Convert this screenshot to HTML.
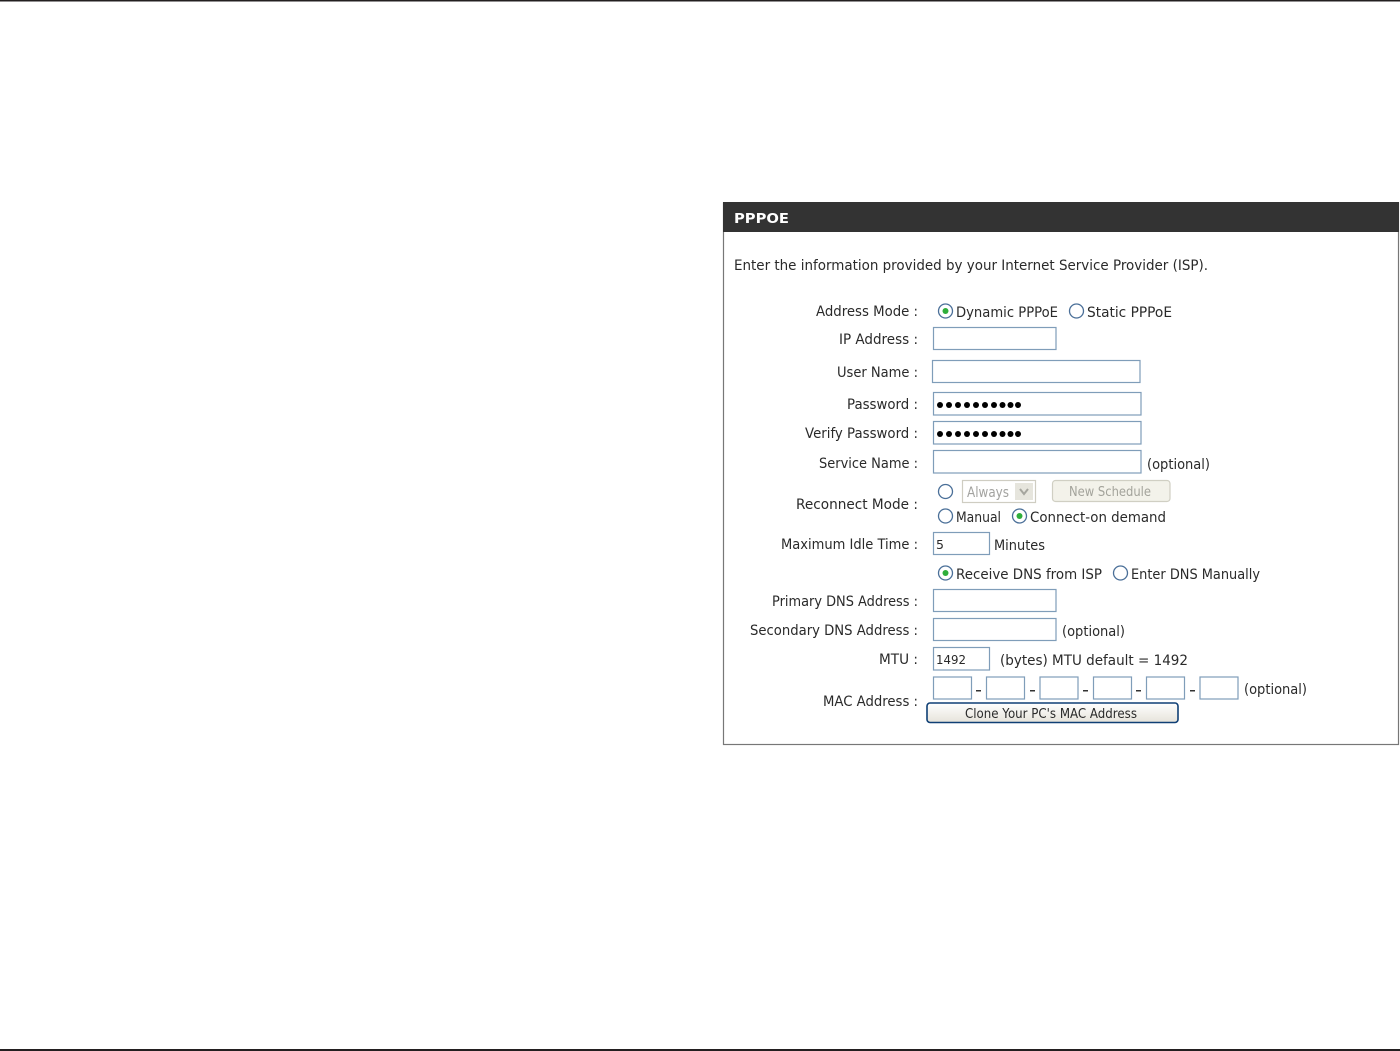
<!DOCTYPE html>
<html><head><meta charset="utf-8"><style>
html,body{margin:0;padding:0;background:#fff;width:1400px;height:1051px;overflow:hidden}
svg{display:block}
text{font-family:"DejaVu Sans",sans-serif;font-size:14px;fill:#2a2a2a}
.i{fill:#fff;stroke:#7f9db9;stroke-width:1.2}
.r{fill:#fff;stroke:#4a6f98;stroke-width:1.3}
.d{fill:#2fae3a}
.dot{fill:#000}
</style></head><body>
<svg width="1400" height="1051" viewBox="0 0 1400 1051" xmlns="http://www.w3.org/2000/svg" lengthAdjust="spacingAndGlyphs">
<defs><linearGradient id="b" x1="0" y1="0" x2="0" y2="1"><stop offset="0" stop-color="#fff"/><stop offset="1" stop-color="#e6e3da"/></linearGradient></defs>
<rect x="0" y="0" width="1400" height="1.5" fill="#231f20"/>
<rect x="0" y="1049" width="1400" height="2" fill="#231f20"/>

<rect x="723.5" y="203" width="675" height="541.5" fill="#fff" stroke="#777" stroke-width="1.2"/>
<rect x="723" y="202" width="676" height="30" fill="#333"/>
<text x="734" y="223" textLength="55" lengthAdjust="spacingAndGlyphs" style="fill:#fff;font-weight:700;font-size:13.5px">PPPOE</text>

<text x="734" y="270" textLength="474" lengthAdjust="spacingAndGlyphs">Enter the information provided by your Internet Service Provider (ISP).</text>

<text x="816" y="316" textLength="102" lengthAdjust="spacingAndGlyphs">Address Mode :</text>
<text x="839" y="344" textLength="79" lengthAdjust="spacingAndGlyphs">IP Address :</text>
<text x="837" y="377" textLength="81" lengthAdjust="spacingAndGlyphs">User Name :</text>
<text x="847" y="409" textLength="71" lengthAdjust="spacingAndGlyphs">Password :</text>
<text x="805" y="438" textLength="113" lengthAdjust="spacingAndGlyphs">Verify Password :</text>
<text x="819" y="468" textLength="99" lengthAdjust="spacingAndGlyphs">Service Name :</text>
<text x="796" y="509" textLength="122" lengthAdjust="spacingAndGlyphs">Reconnect Mode :</text>
<text x="781" y="549" textLength="137" lengthAdjust="spacingAndGlyphs">Maximum Idle Time :</text>
<text x="772" y="606" textLength="146" lengthAdjust="spacingAndGlyphs">Primary DNS Address :</text>
<text x="750" y="635" textLength="168" lengthAdjust="spacingAndGlyphs">Secondary DNS Address :</text>
<text x="879" y="664" textLength="39" lengthAdjust="spacingAndGlyphs">MTU :</text>
<text x="823" y="706" textLength="95" lengthAdjust="spacingAndGlyphs">MAC Address :</text>

<circle class="r" cx="945.5" cy="311" r="7"/><circle class="d" cx="945.5" cy="311" r="3"/>
<text x="956" y="317" textLength="102" lengthAdjust="spacingAndGlyphs">Dynamic PPPoE</text>
<circle class="r" cx="1076.5" cy="311" r="7"/>
<text x="1087" y="317" textLength="85" lengthAdjust="spacingAndGlyphs">Static PPPoE</text>

<rect class="i" x="933.5" y="327.5" width="122.5" height="22"/>
<rect class="i" x="932.5" y="360.5" width="207.5" height="22"/>
<rect class="i" x="933.5" y="392.5" width="207.5" height="22.5"/>
<g class="dot"><circle cx="940" cy="405" r="3"/><circle cx="949" cy="405" r="3"/><circle cx="958" cy="405" r="3"/><circle cx="967" cy="405" r="3"/><circle cx="976" cy="405" r="3"/><circle cx="985" cy="405" r="3"/><circle cx="994" cy="405" r="3"/><circle cx="1002.500" cy="405" r="3"/><circle cx="1010.500" cy="405" r="3"/><circle cx="1018" cy="405" r="3"/></g>
<rect class="i" x="933.5" y="421.5" width="207.5" height="22.5"/>
<g class="dot"><circle cx="940" cy="434" r="3"/><circle cx="949" cy="434" r="3"/><circle cx="958" cy="434" r="3"/><circle cx="967" cy="434" r="3"/><circle cx="976" cy="434" r="3"/><circle cx="985" cy="434" r="3"/><circle cx="994" cy="434" r="3"/><circle cx="1002.500" cy="434" r="3"/><circle cx="1010.500" cy="434" r="3"/><circle cx="1018" cy="434" r="3"/></g>
<rect class="i" x="933.5" y="450.5" width="207.5" height="22.5"/>
<text x="1147" y="469" textLength="63" lengthAdjust="spacingAndGlyphs">(optional)</text>

<circle class="r" cx="945.5" cy="491.500" r="7"/>
<rect x="962.5" y="480.5" width="73" height="22" fill="#fff" stroke="#cfcdc2" stroke-width="1.2"/>
<text x="967" y="497" textLength="42" lengthAdjust="spacingAndGlyphs" style="fill:#a3a3a0">Always</text>
<rect x="1015" y="483" width="18" height="17" fill="#e6e5dd"/>
<path d="M1020 489l4 5 4-5" fill="none" stroke="#a5a59e" stroke-width="2"/>
<rect x="1052.500" y="480.5" width="117.500" height="21" rx="3" fill="#f3f2ea" stroke="#d0cfc3" stroke-width="1.2"/>
<text x="1069" y="496" textLength="82" lengthAdjust="spacingAndGlyphs" style="fill:#a3a39b;font-size:13px">New Schedule</text>

<circle class="r" cx="945.5" cy="516" r="7"/>
<text x="956" y="522" textLength="45" lengthAdjust="spacingAndGlyphs">Manual</text>
<circle class="r" cx="1019.500" cy="516" r="7"/><circle class="d" cx="1019.500" cy="516" r="3"/>
<text x="1030" y="522" textLength="136" lengthAdjust="spacingAndGlyphs">Connect-on demand</text>

<rect class="i" x="933.5" y="532.5" width="56" height="22"/>
<text x="936" y="549" style="font-size:12.5px">5</text>
<text x="994" y="550" textLength="51" lengthAdjust="spacingAndGlyphs">Minutes</text>

<circle class="r" cx="945.5" cy="573" r="7"/><circle class="d" cx="945.5" cy="573" r="3"/>
<text x="956" y="579" textLength="146" lengthAdjust="spacingAndGlyphs">Receive DNS from ISP</text>
<circle class="r" cx="1120.500" cy="573" r="7"/>
<text x="1131" y="579" textLength="129" lengthAdjust="spacingAndGlyphs">Enter DNS Manually</text>

<rect class="i" x="933.5" y="589.5" width="122.5" height="22"/>
<rect class="i" x="933.5" y="618.5" width="122.5" height="22"/>
<text x="1062" y="636" textLength="63" lengthAdjust="spacingAndGlyphs">(optional)</text>

<rect class="i" x="933.5" y="647.5" width="56" height="22.5"/>
<text x="936" y="664" textLength="30" lengthAdjust="spacingAndGlyphs" style="font-size:12.5px">1492</text>
<text x="1000" y="665" textLength="188" lengthAdjust="spacingAndGlyphs">(bytes) MTU default = 1492</text>

<rect class="i" x="933.5" y="677" width="38" height="22"/>
<rect class="i" x="986.5" y="677" width="38" height="22"/>
<rect class="i" x="1040" y="677" width="38" height="22"/>
<rect class="i" x="1093.500" y="677" width="38" height="22"/>
<rect class="i" x="1146.500" y="677" width="38" height="22"/>
<rect class="i" x="1200" y="677" width="38" height="22"/>
<g fill="#333"><rect x="976" y="690" width="5" height="1.5"/><rect x="1030" y="690" width="5" height="1.5"/><rect x="1083" y="690" width="5" height="1.5"/><rect x="1136" y="690" width="5" height="1.5"/><rect x="1190" y="690" width="5" height="1.5"/></g>
<text x="1244" y="694" textLength="63" lengthAdjust="spacingAndGlyphs">(optional)</text>

<rect x="927" y="703" width="251" height="19.5" rx="3" fill="url(#b)" stroke="#0f3f75" stroke-width="1.6"/>
<text x="965" y="718" textLength="172" lengthAdjust="spacingAndGlyphs" style="font-size:13px">Clone Your PC's MAC Address</text>
</svg>
</body></html>
